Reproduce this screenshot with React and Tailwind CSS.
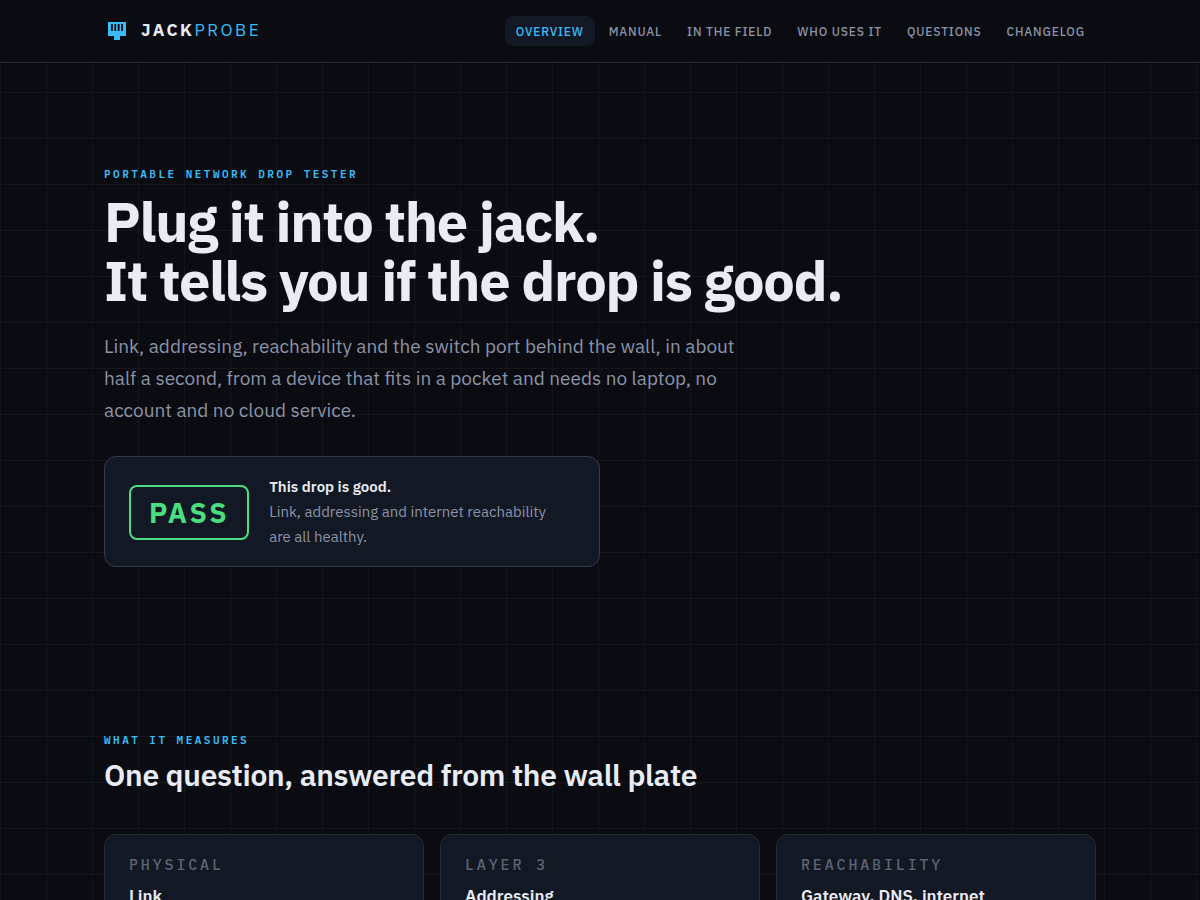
const links = [
  { label: 'Overview', href: '#overview', active: true },
  { label: 'Manual', href: '#manual' },
  { label: 'In the field', href: '#field' },
  { label: 'Who uses it', href: '#users' },
  { label: 'Questions', href: '#questions' },
  { label: 'Changelog', href: '#changelog' },
]

const checks = [
  { layer: 'Physical', title: 'Link' },
  { layer: 'Layer 3', title: 'Addressing' },
  { layer: 'Reachability', title: 'Gateway, DNS, internet' },
]

function Logo() {
  return (
    <a href="#overview" className="flex items-center gap-[11px] whitespace-nowrap pb-0.5 text-[17px] leading-6">
      <svg width="26" height="26" viewBox="0 0 26 26" aria-hidden="true">
        <path fill="#38bdf8" d="M4 5h18v14h-6v4h-6v-4H4z" />
        <path fill="#0b0c11" d="M7 7h1.8v7H7zM10.4 7h1.8v7h-1.8zM13.8 7h1.8v7h-1.8zM17.2 7H19v7h-1.8z" />
      </svg>
      <span className="tracking-[0.15em]">
        <span className="font-bold text-[#e8ecf4]">JACK</span>
        <span className="text-[#38bdf8]">PROBE</span>
      </span>
    </a>
  )
}

function Eyebrow({ children }) {
  return (
    <p className="font-['IBM_Plex_Mono','Liberation_Mono',monospace] text-[11px] font-semibold uppercase leading-[18px] tracking-[0.225em] text-[#38bdf8]">
      {children}
    </p>
  )
}

export default function App() {
  return (
    <div className="min-h-screen bg-[#0b0c11] bg-[linear-gradient(to_right,#14161b_1px,transparent_1px),linear-gradient(to_bottom,#14161b_1px,transparent_1px)] bg-[size:46px_46px] font-['IBM_Plex_Sans',Roboto,sans-serif] text-[#e8ecf4]">
      <header className="sticky top-0 z-10 border-b border-[#262c3a] bg-[#0b0c11]">
        <div className="mx-auto flex max-w-[1040px] items-center justify-between px-6 py-4">
          <Logo />
          <nav className="flex gap-[3px]">
            {links.map((link) => (
              <a
                key={link.href}
                href={link.href}
                className={
                  link.active
                    ? 'whitespace-nowrap rounded-lg bg-[#131924] px-[11px] pb-1 pt-1.5 text-xs font-medium uppercase leading-5 tracking-[0.07em] text-[#38bdf8]'
                    : 'whitespace-nowrap rounded-lg px-[11px] pb-1 pt-1.5 text-xs font-medium uppercase leading-5 tracking-[0.07em] text-[#8b93a7]'
                }
              >
                {link.label}
              </a>
            ))}
          </nav>
        </div>
      </header>

      <main className="mx-auto max-w-[1040px] px-6">
        {/* Hero */}
        <section className="pt-[102px]">
          <Eyebrow>Portable network drop tester</Eyebrow>
          <h1 className="mt-[9px] text-[56px] font-bold leading-[59px] tracking-[-0.023em]">
            Plug it into the jack.
            <br />
            It tells you if the drop is good.
          </h1>
          <p className="mt-5 max-w-[660px] text-[19px] leading-8 text-[#8b93a7]">
            Link, addressing, reachability and the switch port behind the wall, in about half a second, from a device
            that fits in a pocket and needs no laptop, no account and no cloud service.
          </p>

          <div className="mt-[30px] flex max-w-[496px] items-center gap-5 rounded-xl border border-[#333b4b] bg-[#131924] px-6 pb-[17px] pt-[18px]">
            <span className="shrink-0 rounded-lg border-2 border-[#4ade80] px-[18px] py-2 text-[28px] font-bold leading-[35px] tracking-[0.09em] text-[#4ade80]">
              PASS
            </span>
            <p className="max-w-[296px] text-[15px] leading-[25px] text-[#8b93a7]">
              <strong className="block font-semibold leading-6 text-[#e8ecf4]">This drop is good.</strong>
              Link, addressing and internet reachability are all healthy.
            </p>
          </div>
        </section>

        {/* Measurements */}
        <section className="pb-20 pt-[164px]">
          <Eyebrow>What it measures</Eyebrow>
          <h2 className="mt-2 text-[30px] font-semibold leading-9 tracking-[-0.01em]">
            One question, answered from the wall plate
          </h2>
          <div className="mt-[41px] grid grid-cols-3 gap-4">
            {checks.map((check) => (
              <article key={check.title} className="rounded-xl border border-[#232a38] bg-[#131924] px-6 pb-8 pt-5">
                <p className="font-['IBM_Plex_Mono','Liberation_Mono',monospace] text-[15px] font-medium uppercase leading-5 tracking-[0.19em] text-[#5b6375]">
                  {check.layer}
                </p>
                <h3 className="mt-[9px] text-[17px] font-semibold leading-6">{check.title}</h3>
              </article>
            ))}
          </div>
        </section>
      </main>
    </div>
  )
}
